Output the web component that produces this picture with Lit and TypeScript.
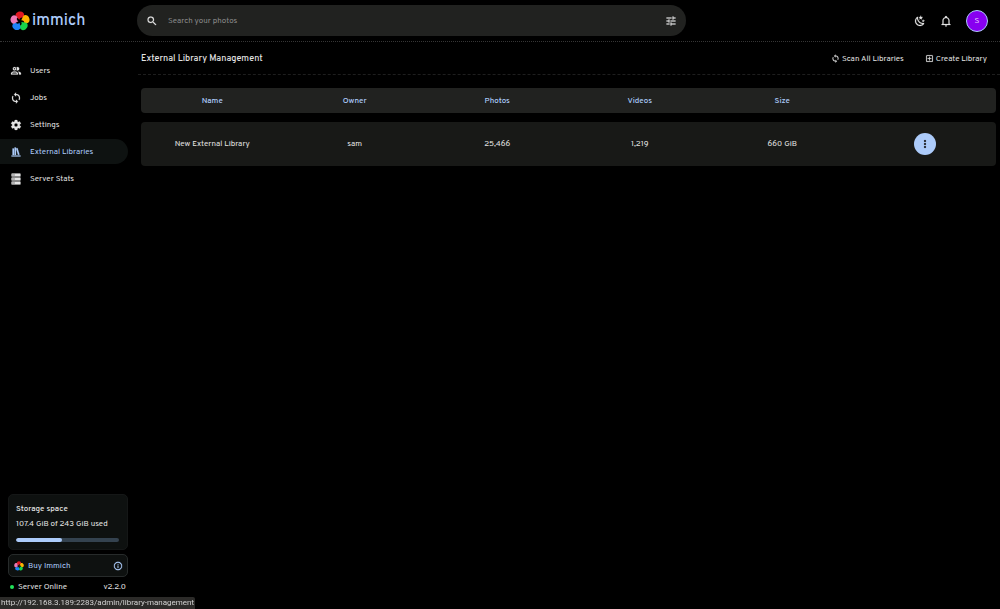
import { LitElement, html, css, svg } from "lit";
import { customElement, property } from "lit/decorators.js";

const icons: Record<string, string> = {
  users: "M13.07 10.41A5 5 0 0 0 13.07 4.59A3.39 3.39 0 0 1 15 4A3.5 3.5 0 0 1 15 11A3.39 3.39 0 0 1 13.07 10.41M5.5 7.5A3.5 3.5 0 1 1 9 11A3.5 3.5 0 0 1 5.5 7.5M7.5 7.5A1.5 1.5 0 1 0 9 6A1.5 1.5 0 0 0 7.5 7.5M16 17V19H2V17S2 13 9 13 16 17 16 17M14 17C13.86 16.22 12.67 15 9 15S4.07 16.31 4 17M15.95 13A5.32 5.32 0 0 1 18 17V19H22V17S22 13.37 15.94 13Z",
  sync: "M12,18A6,6 0 0,1 6,12C6,11 6.25,10.03 6.7,9.2L5.24,7.74C4.46,8.97 4,10.43 4,12A8,8 0 0,0 12,20V23L16,19L12,15M12,4V1L8,5L12,9V6A6,6 0 0,1 18,12C18,13 17.75,13.97 17.3,14.8L18.76,16.26C19.54,15.03 20,13.57 20,12A8,8 0 0,0 12,4Z",
  cog: "M12,15.5A3.5,3.5 0 0,1 8.5,12A3.5,3.5 0 0,1 12,8.5A3.5,3.5 0 0,1 15.5,12A3.5,3.5 0 0,1 12,15.5M19.43,12.97C19.47,12.65 19.5,12.33 19.5,12C19.5,11.67 19.47,11.34 19.43,11L21.54,9.37C21.73,9.22 21.78,8.95 21.66,8.73L19.66,5.27C19.54,5.05 19.27,4.96 19.05,5.05L16.56,6.05C16.04,5.66 15.5,5.32 14.87,5.07L14.5,2.42C14.46,2.18 14.25,2 14,2H10C9.75,2 9.54,2.18 9.5,2.42L9.13,5.07C8.5,5.32 7.96,5.66 7.44,6.05L4.95,5.05C4.73,4.96 4.46,5.05 4.34,5.27L2.34,8.73C2.21,8.95 2.27,9.22 2.46,9.37L4.57,11C4.53,11.34 4.5,11.67 4.5,12C4.5,12.33 4.53,12.65 4.57,12.97L2.46,14.63C2.27,14.78 2.21,15.05 2.34,15.27L4.34,18.73C4.46,18.95 4.73,19.03 4.95,18.95L7.44,17.94C7.96,18.34 8.5,18.68 9.13,18.93L9.5,21.58C9.54,21.82 9.75,22 10,22H14C14.25,22 14.46,21.82 14.5,21.58L14.87,18.93C15.5,18.67 16.04,18.34 16.56,17.94L19.05,18.95C19.27,19.03 19.54,18.95 19.66,18.73L21.66,15.27C21.78,15.05 21.73,14.78 21.54,14.63L19.43,12.97Z",
  shelf: "M9 3V18H12V3H9M12 5L16 18L19 17L15 4L12 5M5 5V18H8V5H5M3 19V21H21V19H3Z",
  server: "M4,1H20A1,1 0 0,1 21,2V6A1,1 0 0,1 20,7H4A1,1 0 0,1 3,6V2A1,1 0 0,1 4,1M4,9H20A1,1 0 0,1 21,10V14A1,1 0 0,1 20,15H4A1,1 0 0,1 3,14V10A1,1 0 0,1 4,9M4,17H20A1,1 0 0,1 21,18V22A1,1 0 0,1 20,23H4A1,1 0 0,1 3,22V18A1,1 0 0,1 4,17M9,5H10V3H9V5M9,13H10V11H9V13M9,21H10V19H9V21M5,3V5H7V3H5M5,11V13H7V11H5M5,19V21H7V19H5Z",
  search: "M9.5,3A6.5,6.5 0 0,1 16,9.5C16,11.11 15.41,12.59 14.44,13.73L14.71,14H15.5L20.5,19L19,20.5L14,15.5V14.71L13.73,14.44C12.59,15.41 11.11,16 9.5,16A6.5,6.5 0 0,1 3,9.5A6.5,6.5 0 0,1 9.5,3M9.5,5C7,5 5,7 5,9.5C5,12 7,14 9.5,14C12,14 14,12 14,9.5C14,7 12,5 9.5,5Z",
  tune: "M3,17V19H9V17H3M3,5V7H13V5H3M13,21V19H21V17H13V15H11V21H13M7,9V11H3V13H7V15H9V9H7M21,13V11H11V13H21M15,9H17V7H21V5H17V3H15V9Z",
  bell: "M10 21H14C14 22.1 13.1 23 12 23S10 22.1 10 21M21 19V20H3V19L5 17V11C5 7.9 7 5.2 10 4.3V4C10 2.9 10.9 2 12 2S14 2.9 14 4V4.3C17 5.2 19 7.9 19 11V17L21 19M17 11C17 8.2 14.8 6 12 6S7 8.2 7 11V18H17V11Z",
  add: "M19,19V5H5V19H19M19,3A2,2 0 0,1 21,5V19A2,2 0 0,1 19,21H5A2,2 0 0,1 3,19V5C3,3.89 3.89,3 5,3H19M11,7H13V11H17V13H13V17H11V13H7V11H11V7Z",
  info: "M11,9H13V7H11M12,20C7.59,20 4,16.41 4,12C4,7.59 7.59,4 12,4C16.41,4 20,7.59 20,12C20,16.41 16.41,20 12,20M12,2A10,10 0 0,0 2,12A10,10 0 0,0 12,22A10,10 0 0,0 22,12A10,10 0 0,0 12,2M11,17H13V11H11V17Z",
  night: "M17.75,4.09L15.22,6.03L16.13,9.09L13.5,7.28L10.87,9.09L11.78,6.03L9.25,4.09L12.44,4L13.5,1L14.56,4L17.75,4.09M21.25,11L19.61,12.25L20.2,14.23L18.5,13.06L16.8,14.23L17.39,12.25L15.75,11L17.81,10.95L18.5,9L19.19,10.95L21.25,11M18.97,15.95C19.8,15.87 20.69,17.05 20.16,17.8C19.84,18.25 19.5,18.67 19.08,19.07C15.17,23 8.84,23 4.94,19.07C1.03,15.17 1.03,8.83 4.94,4.93C5.34,4.53 5.76,4.17 6.21,3.85C6.96,3.32 8.14,4.21 8.06,5.04C7.79,7.9 8.75,10.87 10.95,13.06C13.14,15.26 16.1,16.22 18.97,15.95M17.33,17.97C14.5,17.81 11.7,16.64 9.53,14.5C7.36,12.31 6.2,9.5 6.04,6.68C3.23,9.82 3.34,14.64 6.35,17.66C9.37,20.67 14.19,20.78 17.33,17.97Z",
  dots: "M12,16A2,2 0 0,1 14,18A2,2 0 0,1 12,20A2,2 0 0,1 10,18A2,2 0 0,1 12,16M12,10A2,2 0 0,1 14,12A2,2 0 0,1 12,14A2,2 0 0,1 10,12A2,2 0 0,1 12,10M12,4A2,2 0 0,1 14,6A2,2 0 0,1 12,8A2,2 0 0,1 10,6A2,2 0 0,1 12,4Z",
};

@customElement("mdi-icon")
class MdiIcon extends LitElement {
  @property() name = "";
  static styles = css`
    :host { display: inline-flex; width: 12px; height: 12px; flex: none; }
    svg { width: 100%; height: 100%; fill: currentColor; stroke: currentColor; stroke-width: 0.4; }
  `;
  render() {
    return html`<svg viewBox="0 0 24 24" aria-hidden="true"><path d=${icons[this.name]}></path></svg>`;
  }
}

@customElement("flower-logo")
class FlowerLogo extends LitElement {
  static styles = css`
    :host { display: inline-flex; flex: none; }
    svg { width: 100%; height: 100%; }
  `;
  render() {
    const petals = ["#e01822", "#ffb400", "#18d249", "#1e83f7", "#ed79b5"];
    return html`<svg viewBox="0 0 40 40" aria-hidden="true">
      ${petals.map((c, i) => svg`<path fill=${c} transform="rotate(${i * 72} 20 20.5)"
        d="M18.8 17.5 L11.5 10.5 C10 6 14 1 20 1 C26 1 29 4.5 28 9.5 L26 13.5 C23 12 20 13 18.8 17.5Z"></path>`)}
    </svg>`;
  }
}

@customElement("app-root")
class AppRoot extends LitElement {
  static styles = css`
    :host {
      display: grid;
      grid-template: 42px 1fr / 128px 1fr;
      min-height: 100vh;
      background: #000;
      color: #e4e4e4;
      font: 8px/12px Overpass, "Noto Sans", sans-serif;
    }
    * { box-sizing: border-box; }
    button, input { font: inherit; color: inherit; background: none; border: 0; padding: 0; margin: 0; }
    a { color: inherit; text-decoration: none; }
    .top {
      grid-column: 1 / -1;
      display: grid;
      grid-template-columns: 137px 1fr 314px;
      align-items: center;
      border-bottom: 1px dotted #363636;
    }
    .brand { display: flex; align-items: center; gap: 2px; padding: 1px 0 0 10px; color: #accbfa; font-size: 16px; line-height: 24px; font-weight: 500; }
    .brand flower-logo { width: 20px; height: 20px; }
    .search { display: flex; align-items: center; gap: 10px; height: 31px; padding: 0 9px; border-radius: 16px; background: #212220; }
    .search input { flex: 1; min-width: 0; outline: 0; }
    .search input::placeholder { color: #8b8b8b; opacity: 1; }
    .search button, .tools button { display: flex; }
    .tools { display: flex; justify-content: flex-end; align-items: center; gap: 14px; padding-right: 12px; }
    .tools .avatar { width: 22px; height: 22px; align-items: center; justify-content: center; border-radius: 50%; border: 1px solid #accbfa; background: #8800f0; color: #e8d5ff; }
    .side { display: flex; flex-direction: column; justify-content: space-between; padding-top: 16px; }
    .nav { display: flex; flex-direction: column; gap: 2px; }
    .nav a { display: flex; align-items: center; gap: 8px; height: 25px; padding-left: 10px; border-radius: 0 13px 13px 0; }
    .nav .active { color: #accbfa; background: #0e1211; }
    .foot { display: flex; flex-direction: column; padding: 0 0 0 8px; }
    .card { padding: 8px 8px 7px 7px; border: 1px solid #151717; border-radius: 5px; background: #0e1110; margin-bottom: 4px; }
    .card strong { display: block; font-weight: 500; }
    .card p { margin: 3px 0 8px; }
    .bar { height: 4px; border-radius: 2px; background: #34424f; overflow: hidden; }
    .fill { height: 4px; border-radius: 2px; background: #accbfa; }
    .buy { display: flex; align-items: center; gap: 4px; width: 100%; height: 23px; padding: 0 4px 0 5px; border: 1px solid #272b2b; border-radius: 5px; background: #0e1110; color: #accbfa; }
    .buy flower-logo { width: 10px; height: 10px; }
    .buy span { flex: 1; text-align: left; }
    .buy mdi-icon { width: 10px; height: 10px; }
    .status { display: flex; align-items: center; gap: 4px; height: 20px; padding: 0 2px; margin-bottom: 12px; }
    .status i { width: 4px; height: 4px; border-radius: 50%; background: #21e35a; }
    .status span:last-child { margin-left: auto; }
    .head { display: flex; align-items: center; justify-content: space-between; height: 33px; margin-left: 10px; padding: 1px 13px 0 3px; border-bottom: 1px dashed #1e1e1e; }
    .head h1 { margin: 0; font-size: 9px; line-height: 14px; font-weight: 500; }
    .actions { display: flex; gap: 21px; }
    .actions button { display: flex; align-items: center; gap: 2px; }
    .actions mdi-icon { width: 9px; height: 9px; }
    .wrap { padding: 13px 4px 0 13px; }
    table { width: 100%; border-collapse: separate; border-spacing: 0; table-layout: fixed; text-align: center; }
    th { height: 25px; padding: 0; background: #212220; color: #accbfa; font-weight: 500; }
    td { height: 44px; padding: 0; background: #181917; }
    .gap td { height: 9px; background: none; }
    th:first-child, td:first-child { border-radius: 4px 0 0 4px; }
    th:last-child, td:last-child { border-radius: 0 4px 4px 0; }
    .more { display: inline-flex; align-items: center; justify-content: center; width: 22px; height: 22px; border-radius: 50%; background: #accbfa; color: #101010; vertical-align: middle; }
    .link { position: fixed; left: 0; bottom: 0; height: 12px; padding: 0 1px; border-radius: 0 2px 0 0; background: #2c2b29; color: #d2d2d2; font-family: Roboto, sans-serif; }
  `;

  nav = [
    ["users", "Users"],
    ["sync", "Jobs"],
    ["cog", "Settings"],
    ["shelf", "External Libraries"],
    ["server", "Server Stats"],
  ];

  render() {
    return html`
      <header class="top">
        <a class="brand" href="#"><flower-logo></flower-logo>immich</a>
        <form class="search" role="search">
          <mdi-icon name="search"></mdi-icon>
          <input type="text" aria-label="Search your photos" placeholder="Search your photos" />
          <button type="button" aria-label="Search options"><mdi-icon name="tune"></mdi-icon></button>
        </form>
        <div class="tools">
          <button aria-label="Toggle theme"><mdi-icon name="night"></mdi-icon></button>
          <button aria-label="Notifications"><mdi-icon name="bell"></mdi-icon></button>
          <button class="avatar">S</button>
        </div>
      </header>
      <aside class="side">
        <nav class="nav">
          ${this.nav.map(([icon, label]) => html`<a href="#" class=${icon === "shelf" ? "active" : ""}><mdi-icon name=${icon}></mdi-icon>${label}</a>`)}
        </nav>
        <div class="foot">
          <section class="card">
            <strong>Storage space</strong>
            <p>107.4 GiB of 243 GiB used</p>
            <div class="bar"><div class="fill" style="width:${(107.4 / 243) * 100}%"></div></div>
          </section>
          <button class="buy"><flower-logo></flower-logo><span>Buy Immich</span><mdi-icon name="info"></mdi-icon></button>
          <div class="status"><i></i><span>Server Online</span><span>v2.2.0</span></div>
        </div>
      </aside>
      <main>
        <div class="head">
          <h1>External Library Management</h1>
          <div class="actions">
            <button><mdi-icon name="sync"></mdi-icon>Scan All Libraries</button>
            <button><mdi-icon name="add"></mdi-icon>Create Library</button>
          </div>
        </div>
        <div class="wrap">
          <table>
            <thead>
              <tr><th>Name</th><th>Owner</th><th>Photos</th><th>Videos</th><th>Size</th><th></th></tr>
            </thead>
            <tbody>
              <tr class="gap"><td colspan="6"></td></tr>
              <tr>
                <td>New External Library</td><td>sam</td><td>25,466</td><td>1,219</td><td>660 GiB</td>
                <td><button class="more" aria-label="Library actions"><mdi-icon name="dots"></mdi-icon></button></td>
              </tr>
            </tbody>
          </table>
        </div>
      </main>
      <div class="link">http://192.168.3.189:2283/admin/library-management</div>
    `;
  }
}
